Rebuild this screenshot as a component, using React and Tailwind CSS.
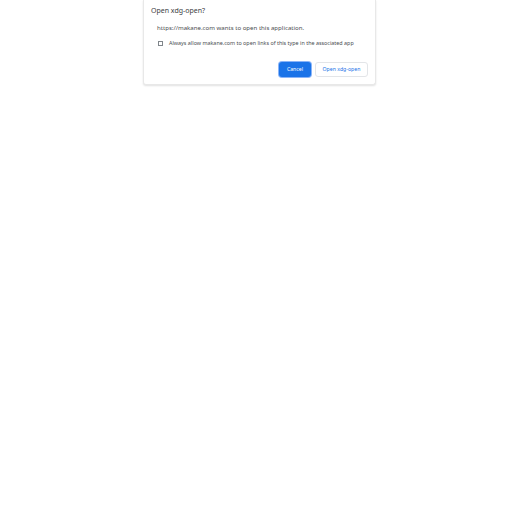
export default function App() {
  return (
    <div className="min-h-[512px] w-[512px] bg-white pl-[143px]" style={{ fontFamily: "'Noto Sans', 'Open Sans', sans-serif" }}>
      <div className="w-[233px] rounded-b-[3px] border border-t-0 border-[#e8e8e8] bg-white pb-[7px] shadow-[0_1px_2px_rgba(0,0,0,0.12)]">
        <div className="px-[7px] pt-[5px] text-[7px] leading-[12px] text-[#3c4043]">Open xdg-open?</div>
        <div className="mt-[6px] px-[13px] text-[6.1px] leading-[10px] text-[#4a4d51]">
          https://makane.com wants to open this application.
        </div>
        <label className="mt-[5px] flex items-center gap-[6px] pl-[14px] text-[5.4px] leading-[10px] text-[#4a4d51]">
          <span className="h-[5px] w-[5px] border border-[#80868b]" />
          Always allow makane.com to open links of this type in the associated app
        </label>
        <div className="mt-[14px] flex justify-end gap-[4px] pr-[7px]">
          <button className="h-[15px] w-[32px] rounded-[3px] bg-[#1a73e8] text-[5.2px] text-white ring-1 ring-[#8ab4f8]">
            Cancel
          </button>
          <button className="h-[15px] w-[53px] rounded-[3px] border border-[#e3e5e8] bg-white text-[5.2px] text-[#1a73e8]">
            Open xdg-open
          </button>
        </div>
      </div>
    </div>
  );
}
